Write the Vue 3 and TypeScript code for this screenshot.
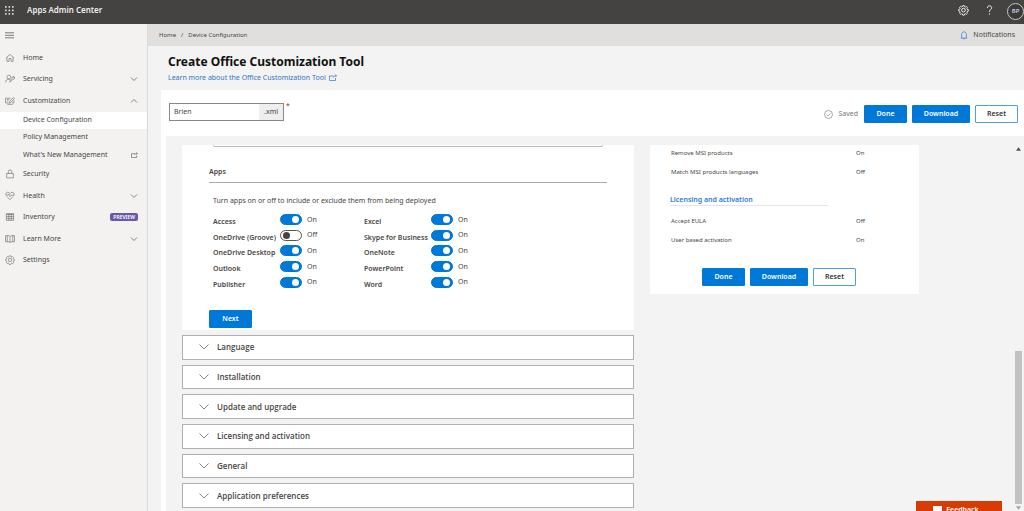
<script setup lang="ts">
import { ref } from 'vue'

interface NavItem {
  label: string
  icon: string
  chevron?: 'down' | 'up'
  badge?: string
  children?: { label: string; active?: boolean; external?: boolean }[]
}

const gear =
  'M6.700 1h2.600l.5 1.900 1.200.5 1.700-1 1.800 1.800-1 1.700.5 1.200 1.900.5v2.400l-1.900.5-.5 1.200 1 1.700-1.800 1.800-1.700-1-1.200.5-.5 1.900H6.700l-.5-1.900-1.200-.5-1.700 1-1.800-1.800 1-1.700-.5-1.200L.1 9.800V7.400L2 6.900l.5-1.200-1-1.700 1.800-1.800 1.700 1 1.200-.5zM8 11.400a3 3 0 1 0 0-6 3 3 0 0 0 0 6'
const external = 'M9 4H1v9h12V8M8 7c1-2.500 3-3.500 7-3.500M12.500 1 15 3.500 12.500 6'

const nav: NavItem[] = [
  { label: 'Home', icon: 'M2.500 7v7.500h3.700V9.500h3.600v5h3.700V7M1 8.300 8 2l7 6.300' },
  {
    label: 'Servicing',
    icon: 'M6 8.700a3.500 3.500 0 1 0 0-7 3.500 3.500 0 0 0 0 7M0 14.500c.2-3.500 2.500-5.800 5.500-5.800 1.200 0 2 .2 2.800.8M7.500 14l.8-3 3.500-3.500a2.800 2.800 0 0 1 3.500-3.500l-1.600 1.700 1.300 1.300L16.500 5.500a2.800 2.800 0 0 1-3.300 3.500l-3.700 4z',
    chevron: 'down',
  },
  {
    label: 'Customization',
    icon: 'M9 3.500H0v8.500h5M15 7.500V12h-3.500M3 14.500h10M2.500 6h4M2.500 8.500h2.500M6.500 12.500l1-3.200L14 2l2 2-6.500 7.200z',
    chevron: 'up',
    children: [
      { label: 'Device Configuration', active: true },
      { label: 'Policy Management' },
      { label: "What's New Management", external: true },
    ],
  },
  { label: 'Security', icon: 'M2 7.500h12v8H2zM5 7.500V4a3 3 0 0 1 6 0v3.500' },
  {
    label: 'Health',
    icon: 'M8 15 2.500 9.500M8 15l5.500-5.500M1 6.500C0 3.500 1.700 1.800 4 1.800 6 1.800 7.200 2.800 8 4c.8-1.200 2-2.200 4-2.200 2.300 0 4 1.700 3 4.700M0 7h4.500L6 5l2.200 4.500L10 7h6',
    chevron: 'down',
  },
  { label: 'Inventory', icon: 'M1.500 2.500h13v12h-13zM1.500 4h13M1.500 7.500h13M1.500 11h13M5.800 2.500v12M10.200 2.500v12', badge: 'PREVIEW' },
  { label: 'Learn More', icon: 'M0 2.500h6.500L8 4l1.500-1.500H16v11H9.500L8 15l-1.500-1.500H0zM8 4v11M3 2.500v11M13 2.500v11', chevron: 'down' },
  { label: 'Settings', icon: gear },
]

const fileName = ref('Brien')

const apps = ref([
  { name: 'Access', on: true },
  { name: 'Excel', on: true },
  { name: 'OneDrive (Groove)', on: false },
  { name: 'Skype for Business', on: true },
  { name: 'OneDrive Desktop', on: true },
  { name: 'OneNote', on: true },
  { name: 'Outlook', on: true },
  { name: 'PowerPoint', on: true },
  { name: 'Publisher', on: true },
  { name: 'Word', on: true },
])

const sections = ['Language', 'Installation', 'Update and upgrade', 'Licensing and activation', 'General', 'Application preferences']
</script>

<template>
  <div class="page">
    <header class="topbar">
      <button class="plain waffle" aria-label="App launcher">
        <svg viewBox="0 0 9 9" width="9" height="9">
          <template v-for="r in 3" :key="r">
            <rect v-for="c in 3" :key="c" :x="(c - 1) * 3.5" :y="(r - 1) * 3.5" width="1.700" height="1.700" rx=".5" fill="#ddd" />
          </template>
        </svg>
      </button>
      <span class="brand">Apps Admin Center</span>
      <button class="plain tool" aria-label="Settings">
        <svg viewBox="-1 0 18 18" width="11" height="11" class="line"><path :d="gear" stroke-width="1.600" /></svg>
      </button>
      <button class="plain tool help" aria-label="Help">
        <svg viewBox="0 0 8 12" width="7" height="10" class="line">
          <path d="M1.500 3.500C1.500 1.800 2.600 1 4 1s2.600.9 2.600 2.300C6.600 5.300 4 5.400 4 8.200M4 10v1.500" stroke-width="1.200" />
        </svg>
      </button>
      <button class="avatar">BP</button>
    </header>

    <div class="body">
      <nav class="sidebar">
        <button class="plain burger" aria-label="Collapse navigation">
          <svg viewBox="0 0 9 7" width="9" height="7" class="line"><path d="M0 .8h9M0 3.300h9M0 5.800h9" stroke-width=".7" /></svg>
        </button>
        <div class="nav-list">
          <template v-for="item in nav" :key="item.label">
            <a href="#" class="nav-item">
              <svg viewBox="-1 0 18 17" width="10" height="10" class="line"><path :d="item.icon" stroke-width="1.100" /></svg>
              <span>{{ item.label }}</span>
              <svg v-if="item.chevron" viewBox="0 0 8 8" width="8" height="8" class="line end" :class="item.chevron">
                <path d="M1 2.500 4 5.500 7 2.500" stroke-width=".8" />
              </svg>
              <span v-if="item.badge" class="badge">{{ item.badge }}</span>
            </a>
            <a v-for="child in item.children" :key="child.label" href="#" class="sub-item" :class="{ active: child.active }">
              <span>{{ child.label }}</span>
              <svg v-if="child.external" viewBox="0 0 16 14" width="7" height="6" class="line end"><path :d="external" stroke-width="1.300" /></svg>
            </a>
          </template>
        </div>
      </nav>

      <main class="main">
        <div class="crumbs">
          <a href="#">Home</a><span>/</span><a href="#">Device Configuration</a>
          <button class="plain notify">
            <svg viewBox="0 0 12 14" width="8" height="9" class="line">
              <path d="M1 11h10M2.300 11V5.500C2.300 3 4 1.300 6 1.300S9.700 3 9.700 5.500V11M4.800 11.500c.2 1.600 2.200 1.600 2.400 0" stroke-width="1.100" />
            </svg>
            Notifications
          </button>
        </div>

        <div class="heading">
          <h1>Create Office Customization Tool</h1>
          <a href="#">
            Learn more about the Office Customization Tool
            <svg viewBox="0 0 16 14" width="8" height="7" class="line"><path :d="external" stroke-width="1.400" /></svg>
          </a>
        </div>

        <div class="panel">
          <div class="toolbar">
            <div class="file">
              <input v-model="fileName" type="text" aria-label="File name" />
              <span>.xml</span>
            </div>
            <span class="required">*</span>
            <span class="saved">
              <svg viewBox="0 0 10 10" width="9" height="9" class="line">
                <circle cx="5" cy="5" r="4.400" stroke-width=".7" /><path d="M2.900 5.200 4.400 6.600 7.200 3.700" stroke-width=".7" />
              </svg>
              Saved
            </span>
            <div class="actions">
              <button class="btn primary">Done</button>
              <button class="btn primary wide">Download</button>
              <button class="btn">Reset</button>
            </div>
          </div>

          <div class="scroller">
            <div class="columns">
              <div class="left">
                <section class="card apps">
                  <div class="box-end"></div>
                  <h2>Apps</h2>
                  <p>Turn apps on or off to include or exclude them from being deployed</p>
                  <div class="app-grid">
                    <div v-for="(app, i) in apps" :key="app.name" class="app">
                      <label :for="'app-' + i">{{ app.name }}</label>
                      <input :id="'app-' + i" v-model="app.on" type="checkbox" role="switch" />
                      <span>{{ app.on ? 'On' : 'Off' }}</span>
                    </div>
                  </div>
                  <button class="btn primary">Next</button>
                </section>
                <div class="sections">
                  <button v-for="name in sections" :key="name" class="section">
                    <svg viewBox="0 0 10 6" width="10" height="6" class="line"><path d="M.5.5 5 5 9.500.5" stroke-width=".8" /></svg>
                    {{ name }}
                  </button>
                </div>
              </div>

              <aside class="card summary">
                <dl>
                  <div><dt>Remove MSI products</dt><dd>On</dd></div>
                  <div><dt>Match MSI products languages</dt><dd>Off</dd></div>
                </dl>
                <h3>Licensing and activation</h3>
                <dl>
                  <div><dt>Accept EULA</dt><dd>Off</dd></div>
                  <div><dt>User based activation</dt><dd>On</dd></div>
                </dl>
                <div class="actions">
                  <button class="btn primary">Done</button>
                  <button class="btn primary wide">Download</button>
                  <button class="btn">Reset</button>
                </div>
              </aside>
            </div>
            <div class="scrollbar" aria-hidden="true">
              <svg viewBox="0 0 6 4" width="5" height="4"><path d="M0 4 3 0l3 4z" fill="#505050" /></svg>
              <div class="track"><div class="thumb"></div></div>
              <svg viewBox="0 0 6 4" width="5" height="4"><path d="M0 0 3 4l3-4z" fill="#a3a3a3" /></svg>
            </div>
          </div>
        </div>
      </main>
    </div>

    <button class="feedback">
      <svg viewBox="0 0 9 8" width="9" height="8"><path d="M0 0h9v6H4L2 8V6H0z" fill="#fff" /></svg>
      Feedback
    </button>
  </div>
</template>

<style>
body {
  overflow: hidden;
}
</style>

<style scoped>
.page {
  display: flex;
  flex-direction: column;
  height: 100vh;
  overflow: hidden;
  background: #f3f3f3;
  color: #484644;
  font: 7px/10px 'Noto Sans', 'Open Sans', sans-serif;
}
.page *,
.page *::before {
  box-sizing: border-box;
}
button,
input {
  font: inherit;
  color: inherit;
}
a {
  color: inherit;
  text-decoration: none;
}
.line {
  fill: none;
  stroke: currentColor;
}
svg {
  flex: none;
}
.plain {
  display: flex;
  align-items: center;
  padding: 0;
  border: 0;
  background: none;
}
.topbar {
  display: flex;
  flex: none;
  align-items: center;
  height: 24px;
  padding: 0 0 4px 5px;
  background: #444341;
  color: #eee;
}
.brand {
  flex: 1;
  margin-left: 13px;
  font-size: 8px;
  font-weight: 600;
}
.help {
  margin: 0 14px 0 17px;
}
.avatar {
  width: 17px;
  height: 17px;
  margin-top: 2px;
  padding: 0;
  border: 1px solid #c8c6c4;
  border-radius: 50%;
  background: #3b3a39;
  color: #c3cdee;
  font-size: 6px;
  font-weight: 600;
  line-height: 14px;
}
.body {
  display: flex;
  flex: 1;
  min-height: 0;
}
.sidebar {
  flex: none;
  width: 148px;
  border-right: 1px solid #dcdad8;
  background: #f3f2f1;
}
.burger {
  height: 23px;
  padding-left: 5px;
}
.nav-list {
  display: flex;
  flex-direction: column;
  height: 224px;
}
.nav-item,
.sub-item {
  display: flex;
  flex: 5 1 0;
  align-items: center;
  padding: 0 9px 0 5px;
}
.nav-item > span:first-of-type {
  margin-left: 8px;
}
.nav-item > svg {
  color: #666;
}
.sub-item {
  flex-grow: 4;
  padding-left: 23px;
}
.end {
  margin-left: auto;
}
.up {
  transform: rotate(180deg);
}
.active {
  background: #fff;
}
.badge {
  margin-left: auto;
  padding: 0 3px;
  border-radius: 2px;
  background: #6b57a8;
  color: #fff;
  font-size: 5px;
  font-weight: 600;
  line-height: 8px;
}
.main {
  display: flex;
  flex: 1;
  flex-direction: column;
  min-width: 0;
}
.crumbs {
  display: flex;
  flex: none;
  align-items: center;
  gap: 5px;
  height: 22px;
  padding: 0 9px 0 11px;
  background: #e1dfdd;
  font-size: 6px;
}
.notify {
  gap: 5px;
  margin-left: auto;
  font-size: 7px;
}
.notify svg {
  color: #2b7cd3;
}
.heading {
  flex: none;
  height: 44px;
  padding: 8px 20px 0;
}
.heading h1 {
  margin: 0;
  color: #111;
  font-size: 12px;
  font-weight: 700;
  line-height: 16px;
}
.heading a {
  display: flex;
  align-items: center;
  gap: 3px;
  height: 15px;
  color: #2f74c8;
}
.panel {
  display: flex;
  flex: 1;
  flex-direction: column;
  min-height: 0;
  margin-left: 13px;
  padding-left: 5px;
  background: #fff;
}
.toolbar {
  display: flex;
  flex: none;
  align-items: center;
  height: 46px;
  padding: 0 6px 0 3px;
}
.file {
  display: flex;
  width: 115px;
  height: 18px;
  margin-bottom: 3px;
  border: 1px solid #888;
}
.file input {
  flex: 1;
  min-width: 0;
  padding: 0 4px;
  border: 0;
  outline: 0;
  background: #fff;
}
.file span {
  padding: 0 5px;
  background: #eee;
  line-height: 16px;
}
.required {
  align-self: flex-start;
  margin: 11px 0 0 2px;
  color: #a4262c;
}
.saved {
  display: flex;
  align-items: center;
  gap: 5px;
  margin: 2px 6px 0 auto;
  color: #777;
}
.actions {
  display: flex;
  gap: 5px;
  margin-top: 2px;
}
.btn {
  width: 43px;
  height: 18px;
  padding: 0;
  border: 1px solid #4f9fe0;
  border-radius: 1px;
  background: #fff;
  color: #333;
  font-weight: 600;
}
.primary {
  border-color: #0078d7;
  background: #0078d7;
  color: #fff;
}
.wide {
  width: 58px;
}
.scroller {
  display: flex;
  flex: 1;
  min-height: 0;
  padding: 9px 2px 0 16px;
  background: #f3f3f3;
}
.columns {
  display: flex;
  flex: 1;
  align-items: flex-start;
  gap: 16px;
  overflow: hidden;
}
.card {
  background: #fff;
}
.left {
  flex: 0 1 452px;
}
.apps {
  height: 185px;
  padding: 0 27px;
}
.box-end {
  height: 2px;
  margin: 0 4px;
  border: 1px solid #bbb;
  border-top: 0;
  border-radius: 0 0 2px 2px;
}
.apps h2 {
  margin: 0;
  padding: 20px 0 5px;
  border-bottom: 1px solid #aaa;
  font-size: 7px;
  font-weight: 600;
  line-height: 10px;
}
.apps p {
  margin: 13px 4px 6px;
}
.app-grid {
  display: grid;
  grid-template-rows: repeat(5, 1fr);
  grid-template-columns: 151px 151px;
  height: 78px;
  margin-left: 4px;
}
.app {
  display: flex;
  align-items: center;
}
.app label {
  width: 67px;
  padding-top: 5px;
  font-weight: 600;
  white-space: nowrap;
}
.app input {
  position: relative;
  width: 22px;
  height: 11px;
  margin: 0 5px 0 0;
  border: 1px solid #555;
  border-radius: 6px;
  appearance: none;
  background: #fff;
}
.app input::before {
  position: absolute;
  top: 1px;
  left: 2px;
  width: 7px;
  height: 7px;
  border-radius: 50%;
  background: #444;
  content: '';
}
.app input:checked {
  border-color: #0078d7;
  background: #0078d7;
}
.app input:checked::before {
  left: 11px;
  background: #fff;
}
.apps .btn {
  margin-top: 20px;
}
.sections {
  display: grid;
  grid-auto-rows: 1fr;
  gap: 5px;
  height: 173px;
  margin-top: 5px;
}
.section {
  display: flex;
  align-items: center;
  gap: 8px;
  padding: 0 16px;
  border: 1px solid #b0b0b0;
  background: #fff;
  font-family: 'Open Sans', sans-serif;
  font-size: 8px;
  font-weight: 600;
}
.section svg {
  color: #666;
}
.summary {
  flex: 0 1 269px;
  height: 149px;
  padding: 0 53px 0 20px;
}
dl {
  margin: 0;
}
dl div {
  display: flex;
  height: 19px;
  padding-left: 1px;
  font-size: 6px;
  line-height: 16px;
}
dt {
  flex: 1;
}
dd {
  width: 10px;
  margin: 0;
}
.summary h3 {
  width: 158px;
  margin: 12px 0 7px;
  border-bottom: 1px solid #e5e5e5;
  color: #2b7cd3;
  font-size: 7px;
  font-weight: 600;
  line-height: 10px;
}
.summary .actions {
  margin: 17px 0 0 32px;
}
.scrollbar {
  display: flex;
  flex: none;
  flex-direction: column;
  align-items: center;
  width: 7px;
  padding: 2px 0 1px;
}
.track {
  display: flex;
  flex: 1;
  flex-direction: column;
  justify-content: flex-end;
  width: 100%;
}
.thumb {
  height: 43%;
  margin-bottom: 2px;
  background: #c1c1c1;
}
.feedback {
  position: fixed;
  right: 22px;
  bottom: -8px;
  display: flex;
  align-items: center;
  justify-content: center;
  gap: 4px;
  width: 86px;
  height: 18px;
  padding: 0 10px 0 4px;
  border: 0;
  background: #d83b01;
  color: #fff;
  font-weight: 600;
}
</style>
